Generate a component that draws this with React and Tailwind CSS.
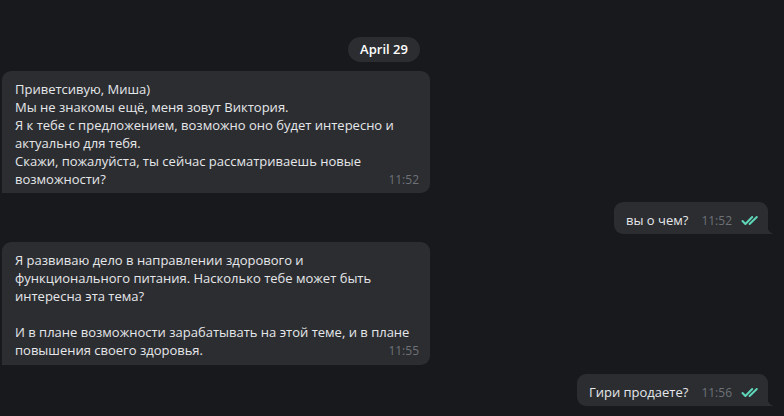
import React from "react";

const font = { fontFamily: '"Open Sans", "Noto Sans", sans-serif' };

function Checks() {
  return (
    <svg width="19" height="11" viewBox="0 0 19 11" fill="none" className="mb-[3px] ml-[9px]">
      <path d="M1.5 6 L4.4 9 L11.2 2" stroke="#5fd6b8" strokeWidth="2" strokeLinecap="round" strokeLinejoin="round" />
      <path d="M8.6 9 L15.8 2" stroke="#5fd6b8" strokeWidth="2" strokeLinecap="round" />
    </svg>
  );
}

function Tail() {
  return (
    <svg width="7" height="9" viewBox="0 0 7 9" className="absolute -right-[6px] bottom-0">
      <path d="M0 0 C0.5 5 2.5 7.5 7 9 L0 9 Z" fill="#2b2d31" />
    </svg>
  );
}

function Time({ children }) {
  return <span className="mb-[1px] text-[12px] leading-[14px] text-[#6e7277]">{children}</span>;
}

function Incoming({ lines, time, pb = "pb-[5px]" }) {
  const last = lines[lines.length - 1];
  return (
    <div className={`w-[428px] rounded-[9px] rounded-bl-none bg-[#2b2d31] pl-[13px] pr-[11px] pt-[9px] ${pb} text-[13px] leading-[18px] text-[#e6e7e9]`}>
      {lines.slice(0, -1).map((l, i) => (
        <div key={i} className="whitespace-nowrap">{l || "\u00a0"}</div>
      ))}
      <div className="flex items-end justify-between">
        <span className="whitespace-nowrap">{last}</span>
        <Time>{time}</Time>
      </div>
    </div>
  );
}

function Outgoing({ text, time }) {
  return (
    <div className="relative flex items-end rounded-[9px] rounded-br-none bg-[#2b2d31] pl-[12px] pr-[8px] pt-[9px] pb-[5px] text-[13px] leading-[18px] text-[#e6e7e9]">
      <span className="mr-[13px] whitespace-nowrap">{text}</span>
      <Time>{time}</Time>
      <Checks />
      <Tail />
    </div>
  );
}

export default function App() {
  return (
    <div className="h-[416px] w-[784px] overflow-hidden bg-[#18191d]" style={font}>
      <div className="flex w-[768px] flex-col pt-[37px]">
        <div className="flex justify-center">
          <div className="flex h-[25px] w-[72px] items-center justify-center rounded-full bg-[#2b2d31] text-[13px] font-semibold text-white">
            April 29
          </div>
        </div>
        <div className="mt-[9px] pl-[2px]">
          <Incoming
            time="11:52"
            lines={[
              "Приветсивую, Миша)",
              "Мы не знакомы ещё, меня зовут Виктория.",
              "Я к тебе с предложением, возможно оно будет интересно и",
              "актуально для тебя.",
              "Скажи, пожалуйста, ты сейчас рассматриваешь новые",
              "возможности?",
            ]}
          />
        </div>
        <div className="mt-[9px] flex justify-end">
          <Outgoing text="вы о чем?" time="11:52" />
        </div>
        <div className="mt-[8px] pl-[2px]">
          <Incoming
            time="11:55"
            pb="pb-[6px]"
            lines={[
              "Я развиваю дело в направлении здорового и",
              "функционального питания. Насколько тебе может быть",
              "интересна эта тема?",
              "",
              "И в плане возможности зарабатывать на этой теме, и в плане",
              "повышения своего здоровья.",
            ]}
          />
        </div>
        <div className="mt-[9px] flex justify-end">
          <Outgoing text="Гири продаете?" time="11:56" />
        </div>
      </div>
    </div>
  );
}
